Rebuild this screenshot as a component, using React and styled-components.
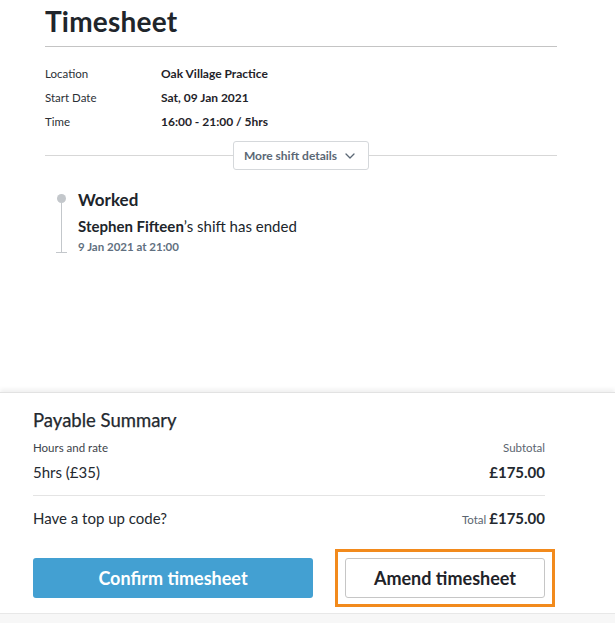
import styled, { createGlobalStyle } from 'styled-components';

const GlobalStyle = createGlobalStyle`
  html, body {
    margin: 0;
    padding: 0;
    background: #ffffff;
    font-family: Lato, "Noto Sans", sans-serif;
    color: #20252b;
  }
`;

const Page = styled.div`
  width: 615px;
  height: 623px;
  display: flex;
  flex-direction: column;
  overflow: hidden;
`;

const Top = styled.div`
  flex: 1;
  padding: 0 58px 0 45px;
`;

const Title = styled.h1`
  margin: 0;
  padding-top: 4px;
  height: 42px;
  font-size: 28px;
  font-weight: 700;
  letter-spacing: 0.2px;
  border-bottom: 1px solid #c4c4c4;
`;

const Details = styled.div`
  display: grid;
  grid-template-columns: 116px 1fr;
  row-gap: 7px;
  padding-top: 18px;
  line-height: 17px;
`;

const Label = styled.div`
  font-size: 11.5px;
  color: #2c3036;
`;

const Value = styled.div`
  font-size: 12px;
  font-weight: 700;
  color: #1f2329;
`;

const DividerRow = styled.div`
  display: flex;
  align-items: center;
  margin-top: 11px;
  &::before, &::after {
    content: '';
    flex: 1;
    height: 1px;
    background: #d7d7d7;
  }
`;

const MoreButton = styled.button`
  display: flex;
  align-items: center;
  gap: 8px;
  height: 29px;
  padding: 0 13px 0 10px;
  border: 1px solid #d5d8db;
  border-radius: 3px;
  background: #fff;
  font-family: inherit;
  font-size: 12px;
  font-weight: 700;
  color: #5b6875;
`;

const Timeline = styled.div`
  display: flex;
  gap: 11px;
  margin-top: 20px;
  padding-left: 11px;
`;

const Rail = styled.div`
  position: relative;
  width: 11px;
  height: 59px;
  display: flex;
  flex-direction: column;
  align-items: center;
  padding-top: 4px;
  &::before {
    content: '';
    width: 9px;
    height: 9px;
    border-radius: 50%;
    background: #c3c7cb;
  }
  &::after {
    content: '';
    flex: 1;
    width: 1px;
    background: #c3c7cb;
  }
`;

const RailFoot = styled.span`
  position: absolute;
  bottom: 0;
  left: 0;
  width: 11px;
  height: 1px;
  background: #c3c7cb;
`;

const Event = styled.div`
  display: flex;
  flex-direction: column;
`;

const EventTitle = styled.div`
  font-size: 17px;
  font-weight: 700;
  line-height: 20px;
`;

const EventText = styled.div`
  margin-top: 7px;
  font-size: 15px;
  line-height: 18px;
  b { font-weight: 700; }
`;

const EventDate = styled.div`
  margin-top: 5px;
  font-size: 11.5px;
  font-weight: 700;
  color: #617080;
`;

const Summary = styled.div`
  height: 231px;
  flex-shrink: 0;
  box-sizing: border-box;
  border-top: 1px solid #e2e2e2;
  box-shadow: 0 -3px 4px rgba(0, 0, 0, 0.06);
  padding: 0 70px 0 33px;
  position: relative;
`;

const SummaryTitle = styled.div`
  padding-top: 16px;
  font-size: 18.5px;
  line-height: 22px;
  font-weight: 400;
  color: #24292f;
  -webkit-text-stroke: 0.25px #24292f;
`;

const Row = styled.div`
  display: flex;
  justify-content: space-between;
  align-items: baseline;
  margin-top: ${(p) => p.$gap}px;
`;

const Small = styled.span`
  font-size: 11.5px;
  color: ${(p) => (p.$muted ? '#5b6570' : '#3d434a')};
`;

const Regular = styled.span`
  font-size: 15px;
  color: #24292f;
`;

const Amount = styled.span`
  font-size: 15px;
  font-weight: 700;
  color: #24292f;
`;

const Rule = styled.div`
  height: 1px;
  background: #e4e4e4;
  margin-top: 14px;
`;

const Buttons = styled.div`
  display: flex;
  margin-top: 22px;
  margin-right: -10px;
  align-items: center;
`;

const Primary = styled.button`
  width: 280px;
  height: 40px;
  flex-shrink: 0;
  border: none;
  border-radius: 3px;
  background: #43a0d2;
  color: #fff;
  font-family: inherit;
  font-size: 18px;
  font-weight: 700;
`;

const Focus = styled.div`
  margin-left: 22px;
  padding: 6px 7px;
  border: 3px solid #f28a1c;
`;

const Secondary = styled.button`
  display: block;
  width: 200px;
  height: 40px;
  border: 1px solid #c6c6c6;
  border-radius: 3px;
  background: #fff;
  color: #1f2329;
  font-family: inherit;
  font-size: 18px;
  font-weight: 700;
`;

const Footer = styled.div`
  position: absolute;
  left: 0;
  right: 0;
  bottom: 0;
  height: 9px;
  background: #f7f7f7;
  border-top: 1px solid #e8e8e8;
`;

const Chevron = () => (
  <svg width="10" height="6" viewBox="0 0 10 6" fill="none">
    <path d="M1 1l4 4 4-4" stroke="#5b6875" strokeWidth="1.3" strokeLinecap="round" strokeLinejoin="round" />
  </svg>
);

export default function App() {
  return (
    <Page>
      <GlobalStyle />
      <Top>
        <Title>Timesheet</Title>
        <Details>
          <Label>Location</Label>
          <Value>Oak Village Practice</Value>
          <Label>Start Date</Label>
          <Value>Sat, 09 Jan 2021</Value>
          <Label>Time</Label>
          <Value>16:00 - 21:00 / 5hrs</Value>
        </Details>
        <DividerRow>
          <MoreButton>
            More shift details <Chevron />
          </MoreButton>
        </DividerRow>
        <Timeline>
          <Rail>
            <RailFoot />
          </Rail>
          <Event>
            <EventTitle>Worked</EventTitle>
            <EventText>
              <b>Stephen Fifteen</b>’s shift has ended
            </EventText>
            <EventDate>9 Jan 2021 at 21:00</EventDate>
          </Event>
        </Timeline>
      </Top>
      <Summary>
        <SummaryTitle>Payable Summary</SummaryTitle>
        <Row $gap={10}>
          <Small>Hours and rate</Small>
          <Small $muted>Subtotal</Small>
        </Row>
        <Row $gap={9}>
          <Regular>5hrs (£35)</Regular>
          <Amount>£175.00</Amount>
        </Row>
        <Rule />
        <Row $gap={12}>
          <Regular>Have a top up code?</Regular>
          <span>
            <Small $muted>Total </Small>
            <Amount>£175.00</Amount>
          </span>
        </Row>
        <Buttons>
          <Primary>Confirm timesheet</Primary>
          <Focus>
            <Secondary>Amend timesheet</Secondary>
          </Focus>
        </Buttons>
        <Footer />
      </Summary>
    </Page>
  );
}
